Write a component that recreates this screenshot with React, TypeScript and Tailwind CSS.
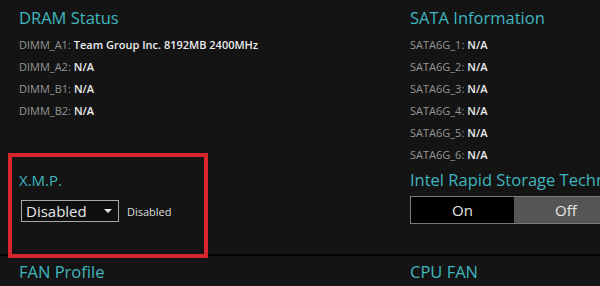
const dimms = [
  { slot: "DIMM_A1", value: "Team Group Inc. 8192MB 2400MHz" },
  { slot: "DIMM_A2", value: "N/A" },
  { slot: "DIMM_B1", value: "N/A" },
  { slot: "DIMM_B2", value: "N/A" },
];

const satas = ["SATA6G_1", "SATA6G_2", "SATA6G_3", "SATA6G_4", "SATA6G_5", "SATA6G_6"];

function InfoRow({ label, value }: { label: string; value: string }) {
  return (
    <div className="h-[22px] flex items-center text-[11px] leading-none whitespace-nowrap">
      <span className="text-[#959595]">{label}:</span>
      <span className="ml-[3px] text-[#ececec] font-semibold">{value}</span>
    </div>
  );
}

export default function App() {
  return (
    <div
      className="relative w-[600px] h-[286px] overflow-hidden bg-[#141414] text-white"
      style={{ fontFamily: '"Open Sans", "Noto Sans", sans-serif' }}
    >
      <div className="flex h-[254px]">
        {/* Left column */}
        <div className="w-[410px] shrink-0 pl-[19px] pt-[6px] flex flex-col">
          <h2 className="text-[16.5px] leading-[24px] text-[#3fb6bf]">DRAM Status</h2>
          <div className="mt-[3px]">
            {dimms.map((d) => (
              <InfoRow key={d.slot} label={d.slot} value={d.value} />
            ))}
          </div>

          {/* X.M.P. */}
          <div className="mt-[48px]">
            <h3 className="text-[15px] leading-[22px] text-[#3fb6bf]">X.M.P.</h3>
            <div className="mt-[9px] ml-[2px] flex items-center">
              <div className="w-[98px] h-[22px] border border-[#a8a8a8] flex items-center pl-[4px] pr-[6px] bg-[#0f0f0f]">
                <span className="text-[15px] leading-none text-[#e6e6e6]">Disabled</span>
                <span className="ml-auto w-0 h-0 border-l-[4px] border-r-[4px] border-t-[4px] border-l-transparent border-r-transparent border-t-[#e6e6e6]" />
              </div>
              <span className="ml-[8px] mt-[3px] text-[11px] text-[#dedede]">Disabled</span>
            </div>
          </div>
        </div>

        {/* Right column */}
        <div className="flex-1 min-w-0 overflow-hidden pt-[6px] flex flex-col">
          <h2 className="text-[16.5px] leading-[24px] text-[#3fb6bf] whitespace-nowrap">SATA Information</h2>
          <div className="mt-[3px]">
            {satas.map((s) => (
              <InfoRow key={s} label={s} value="N/A" />
            ))}
          </div>
          <h2 className="mt-[3px] text-[16.5px] leading-[24px] text-[#3fb6bf] whitespace-nowrap">
            Intel Rapid Storage Technology
          </h2>
          <div className="mt-[4px] w-[210px] shrink-0 h-[28px] border border-[#7a7a7a] flex text-[15px] text-[#e6e6e6]">
            <div className="w-[103px] bg-black flex items-center justify-center">On</div>
            <div className="w-[104px] bg-[#555555] flex items-center justify-center">Off</div>
          </div>
        </div>
      </div>

      <div className="h-[2px] bg-[#050505]" />

      <div className="flex pt-[4px]">
        <h2 className="w-[410px] shrink-0 pl-[19px] text-[16.5px] leading-[24px] text-[#3fb6bf]">FAN Profile</h2>
        <h2 className="text-[16.5px] leading-[24px] text-[#3fb6bf]">CPU FAN</h2>
      </div>

      {/* red highlight annotation */}
      <div className="absolute left-[8px] top-[153px] w-[200px] h-[105px] border-[4px] border-[#d9252d] pointer-events-none" />
    </div>
  );
}
